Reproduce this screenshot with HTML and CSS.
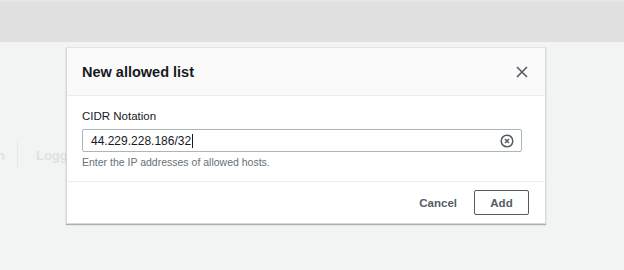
FILE: index.html
```html
<!DOCTYPE html>
<html lang="en">
<head>
    <meta charset="UTF-8">
    <meta name="viewport" content="width=device-width, initial-scale=1.0">
    <title>New allowed list</title>
    <link rel="stylesheet" href="styles.css">
</head>
<body>
    <div class="topbar"></div>
    <div class="page">
        <div class="behind">
            <span class="behind-item">n</span>
            <span class="behind-sep"></span>
            <span class="behind-item">Logging</span>
        </div>

        <div class="modal">
            <div class="modal-header">
                <h2 class="modal-title">New allowed list</h2>
                <button class="close-btn" aria-label="Close">
                    <svg width="12" height="12" viewBox="0 0 12 12">
                        <path d="M1 1 L11 11 M11 1 L1 11" stroke="#545b64" stroke-width="1.6" fill="none"/>
                    </svg>
                </button>
            </div>
            <div class="modal-body">
                <label class="field-label" for="cidr">CIDR Notation</label>
                <div class="input-wrap">
                    <span class="input-text">44.229.228.186/32<span class="caret"></span></span>
                    <span class="clear-icon">
                        <svg width="14" height="14" viewBox="0 0 14 14">
                            <circle cx="7" cy="7" r="5.8" stroke="#545b64" stroke-width="1.5" fill="none"/>
                            <path d="M5 5 L9 9 M9 5 L5 9" stroke="#545b64" stroke-width="1.5" fill="none"/>
                        </svg>
                    </span>
                </div>
                <div class="hint">Enter the IP addresses of allowed hosts.</div>
            </div>
            <div class="modal-footer">
                <button class="btn-link">Cancel</button>
                <button class="btn-normal">Add</button>
            </div>
        </div>
    </div>
</body>
</html>
```

FILE: styles.css
```css
html, body {
    margin: 0;
    padding: 0;
    background: #f2f3f3;
    font-family: "Liberation Sans", Arial, sans-serif;
    color: #16191f;
}
body {
    width: 624px;
    height: 270px;
    overflow: hidden;
}
.topbar {
    height: 42px;
    background: #dfe0df;
    border-top: 2px solid #e6e7e6;
    box-sizing: border-box;
}
.page {
    position: relative;
    height: 228px;
}
.behind {
    position: absolute;
    left: -3px;
    top: 100px;
    display: flex;
    align-items: center;
    gap: 12px;
    font-size: 13px;
    font-weight: bold;
    color: #dfe1e1;
}
.behind-sep {
    width: 1px;
    height: 26px;
    background: #e6e8e8;
    margin-right: 6px;
}
.modal {
    position: absolute;
    left: 66px;
    top: 5px;
    width: 478px;
    background: #fff;
    border: 1px solid #d5dbdb;
    border-top-color: #e1e4e4;
    box-shadow: 0 1px 1px 0 rgba(0, 28, 36, 0.3);
}
.modal-header {
    height: 47px;
    background: #fafafa;
    border-bottom: 1px solid #eaeded;
    display: flex;
    align-items: center;
    justify-content: space-between;
    padding: 0 17px 0 15px;
}
.modal-title {
    margin: 0;
    font-size: 14.5px;
    font-weight: bold;
    color: #16191f;
}
.close-btn {
    border: 0;
    background: none;
    padding: 0;
    display: flex;
}
.modal-body {
    padding: 14px 23px 13px 15px;
    border-bottom: 1px solid #eaeded;
}
.field-label {
    display: block;
    font-size: 11.5px;
    color: #16191f;
    margin-bottom: 7px;
}
.input-wrap {
    height: 23px;
    box-sizing: border-box;
    border: 1px solid #aab7b8;
    border-radius: 2px;
    display: flex;
    align-items: center;
    justify-content: space-between;
    padding: 0 7px 0 8px;
}
.input-text {
    font-size: 12px;
    color: #16191f;
    display: flex;
    align-items: center;
}
.caret {
    display: inline-block;
    width: 1px;
    height: 14px;
    background: #16191f;
    margin-left: 1px;
}
.clear-icon {
    display: flex;
}
.hint {
    font-size: 10.5px;
    color: #687078;
    margin-top: 4px;
}
.modal-footer {
    height: 41px;
    display: flex;
    align-items: center;
    justify-content: flex-end;
    gap: 17px;
    padding: 0 16px 0 0;
}
.btn-link, .btn-normal {
    font-family: "Liberation Sans", Arial, sans-serif;
    font-size: 11.5px;
    font-weight: bold;
    color: #545b64;
    background: #fff;
    cursor: pointer;
}
.btn-link {
    border: 0;
    padding: 0;
}
.btn-normal {
    width: 55px;
    height: 25px;
    border: 1px solid #545b64;
    border-radius: 2px;
}
```
